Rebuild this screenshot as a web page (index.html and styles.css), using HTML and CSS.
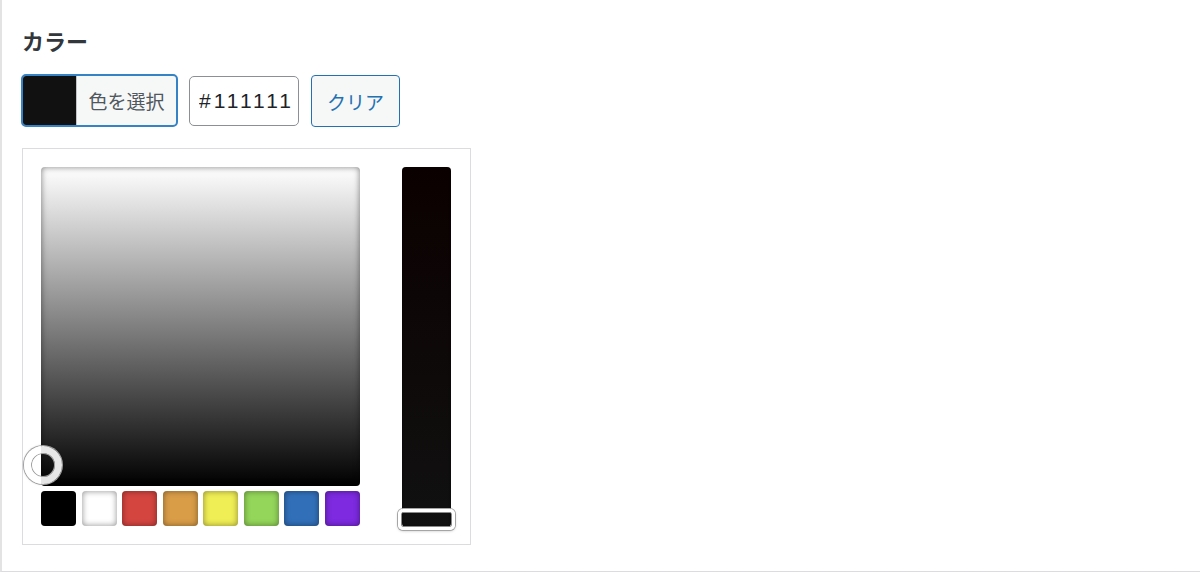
FILE: index.html
```html
<!DOCTYPE html>
<html lang="ja">
<head>
  <meta charset="UTF-8" />
  <title>カラー設定</title>
  <meta name="viewport" content="width=device-width, initial-scale=1.0">
  <link rel="stylesheet" href="styles.css">
</head>
<body>
  <div class="panel">
    <h2 class="field-title">カラー</h2>

    <div class="picker-row">
      <button type="button" class="color-result">
        <span class="color-chip"></span>
        <span class="color-result-text">色を選択</span>
      </button>
      <input type="text" class="color-hex" value="#111111">
      <button type="button" class="btn-clear">クリア</button>
    </div>

    <div class="picker-holder">
      <div class="picker-main">
        <div class="picker-square">
          <span class="square-handle"></span>
        </div>
        <div class="picker-palette">
          <span class="swatch swatch-black"></span>
          <span class="swatch swatch-white"></span>
          <span class="swatch swatch-red"></span>
          <span class="swatch swatch-orange"></span>
          <span class="swatch swatch-yellow"></span>
          <span class="swatch swatch-green"></span>
          <span class="swatch swatch-blue"></span>
          <span class="swatch swatch-purple"></span>
        </div>
      </div>
      <div class="picker-strip">
        <span class="strip-handle"></span>
      </div>
    </div>
  </div>
</body>
</html>
```

FILE: styles.css
```css
body { margin: 0; background: #fff; font-family: "Noto Sans CJK JP", "Liberation Sans", sans-serif; color: #2c3338; }

.panel { width: 1178px; height: 546px; padding: 25px 0 0 20px; border-left: 2px solid #e3e3e3; border-bottom: 1px solid #dcdcde; }
.field-title { margin: 0; font-size: 22px; line-height: 30px; font-weight: 700; color: #32373c; }

/* color button + hex field + clear */
.picker-row { display: flex; align-items: flex-start; margin-top: 19px; }
.color-result { display: flex; width: 157px; height: 53px; margin: 0 0 0 -1px; padding: 0; border: 2px solid #3582c4; border-radius: 5px; background: #f6f7f7; overflow: hidden; cursor: pointer; font-family: inherit; }
.color-chip { width: 53px; height: 100%; background: #111; border-right: 1px solid #c3c4c7; }
.color-result-text { flex: 1; line-height: 49px; font-size: 19px; color: #50575e; text-align: center; }
.color-hex { box-sizing: border-box; width: 110px; height: 50px; margin: 2px 0 0 11px; padding: 0 2px 0 9px; border: 1px solid #8c8f94; border-radius: 5px; font-family: "Liberation Sans", sans-serif; font-size: 21px; letter-spacing: 3px; color: #1d2327; background: #fff; }
.btn-clear { box-sizing: border-box; width: 89px; height: 52px; margin: 1px 0 0 12px; padding: 0; border: 1px solid #2271b1; border-radius: 4px; background: #f6f7f7; color: #2271b1; font-family: inherit; font-size: 19px; cursor: pointer; }

/* picker box */
.picker-holder { box-sizing: border-box; display: flex; justify-content: space-between; width: 449px; height: 397px; margin-top: 21px; padding: 18px 19px 18px 18px; border: 1px solid #dcdcde; }
.picker-main { width: 319px; }
.picker-square { position: relative; height: 319px; border-radius: 4px; background: linear-gradient(to bottom, #fff, #000); box-shadow: inset 0 0 6px rgba(0,0,0,0.5); }
.square-handle { position: absolute; left: -17px; top: 279px; box-sizing: border-box; width: 38px; height: 38px; border: 7px solid rgba(255,255,255,0.9); border-radius: 50%; box-shadow: 0 0 0 1px #a0a0a0, inset 0 0 0 1px #a0a0a0, 0 0 3px rgba(0,0,0,0.25); }

.picker-palette { display: flex; justify-content: space-between; margin-top: 5px; }
.swatch { width: 35px; height: 35px; border-radius: 4px; box-shadow: inset 0 0 6px rgba(0,0,0,0.45); }
.swatch-black { background: #000; }
.swatch-white { background: #fff; }
.swatch-red { background: #d44540; }
.swatch-orange { background: #d99d48; }
.swatch-yellow { background: #f0ee55; }
.swatch-green { background: #94d65a; }
.swatch-blue { background: #3170b9; }
.swatch-purple { background: #7d2ae0; }

.picker-strip { position: relative; width: 49px; height: 360px; border-radius: 4px; background: linear-gradient(to bottom, #0b0000, #111); box-shadow: inset 0 0 3px rgba(0,0,0,0.5); }
.strip-handle { position: absolute; left: -4px; top: 342px; box-sizing: border-box; width: 57px; height: 21px; border: 3px solid #fff; border-radius: 5px; box-shadow: 0 0 0 1px #a5a5a5, inset 0 0 0 1px #8a8a8a, 0 1px 3px rgba(0,0,0,0.25); }
```
